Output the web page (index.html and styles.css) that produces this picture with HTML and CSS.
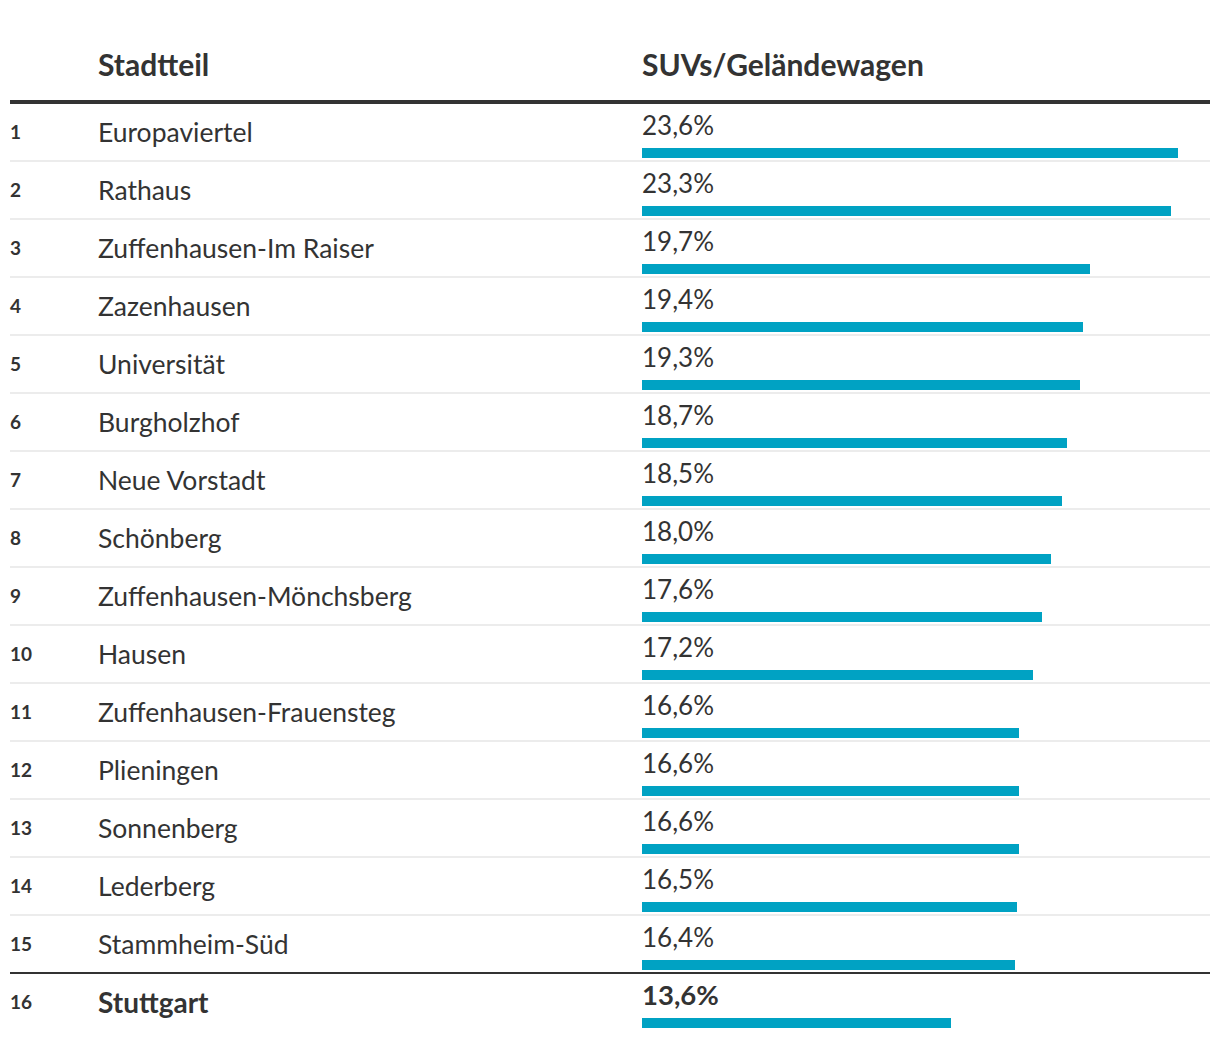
FILE: index.html
```html
<!DOCTYPE html>
<html lang="de">
<head>
<meta charset="utf-8">
<title>SUVs/Geländewagen nach Stadtteil</title>
<link rel="stylesheet" href="styles.css">
</head>
<body>
<div class="table">
  <div class="row head">
    <div class="rank"></div>
    <div class="name">Stadtteil</div>
    <div class="value">SUVs/Geländewagen</div>
  </div>
  <div class="row"><div class="rank">1</div><div class="name">Europaviertel</div><div class="value"><span class="num">23,6%</span><div class="bar" style="width:94.4%"></div></div></div>
  <div class="row"><div class="rank">2</div><div class="name">Rathaus</div><div class="value"><span class="num">23,3%</span><div class="bar" style="width:93.2%"></div></div></div>
  <div class="row"><div class="rank">3</div><div class="name">Zuffenhausen-Im Raiser</div><div class="value"><span class="num">19,7%</span><div class="bar" style="width:78.8%"></div></div></div>
  <div class="row"><div class="rank">4</div><div class="name">Zazenhausen</div><div class="value"><span class="num">19,4%</span><div class="bar" style="width:77.6%"></div></div></div>
  <div class="row"><div class="rank">5</div><div class="name">Universität</div><div class="value"><span class="num">19,3%</span><div class="bar" style="width:77.2%"></div></div></div>
  <div class="row"><div class="rank">6</div><div class="name">Burgholzhof</div><div class="value"><span class="num">18,7%</span><div class="bar" style="width:74.8%"></div></div></div>
  <div class="row"><div class="rank">7</div><div class="name">Neue Vorstadt</div><div class="value"><span class="num">18,5%</span><div class="bar" style="width:74%"></div></div></div>
  <div class="row"><div class="rank">8</div><div class="name">Schönberg</div><div class="value"><span class="num">18,0%</span><div class="bar" style="width:72%"></div></div></div>
  <div class="row"><div class="rank">9</div><div class="name">Zuffenhausen-Mönchsberg</div><div class="value"><span class="num">17,6%</span><div class="bar" style="width:70.4%"></div></div></div>
  <div class="row"><div class="rank">10</div><div class="name">Hausen</div><div class="value"><span class="num">17,2%</span><div class="bar" style="width:68.8%"></div></div></div>
  <div class="row"><div class="rank">11</div><div class="name">Zuffenhausen-Frauensteg</div><div class="value"><span class="num">16,6%</span><div class="bar" style="width:66.4%"></div></div></div>
  <div class="row"><div class="rank">12</div><div class="name">Plieningen</div><div class="value"><span class="num">16,6%</span><div class="bar" style="width:66.4%"></div></div></div>
  <div class="row"><div class="rank">13</div><div class="name">Sonnenberg</div><div class="value"><span class="num">16,6%</span><div class="bar" style="width:66.4%"></div></div></div>
  <div class="row"><div class="rank">14</div><div class="name">Lederberg</div><div class="value"><span class="num">16,5%</span><div class="bar" style="width:66%"></div></div></div>
  <div class="row last-before"><div class="rank">15</div><div class="name">Stammheim-Süd</div><div class="value"><span class="num">16,4%</span><div class="bar" style="width:65.6%"></div></div></div>
  <div class="row total"><div class="rank">16</div><div class="name">Stuttgart</div><div class="value"><span class="num">13,6%</span><div class="bar" style="width:54.4%"></div></div></div>
</div>
</body>
</html>
```
FILE: styles.css
```css
html, body {
  margin: 0;
  padding: 0;
  background: #fff;
}
body {
  padding: 0 10px;
  font-family: "Lato", "Liberation Sans", sans-serif;
  color: #333;
}
.table {
  width: 1200px;
}
.row {
  display: grid;
  grid-template-columns: 88px 544px 1fr;
  height: 56px;
  border-bottom: 2px solid #ececec;
}
.rank {
  align-self: center;
  font-size: 19px;
  font-weight: 700;
  line-height: 20px;
  padding-bottom: 1px;
}
.name {
  align-self: center;
  font-size: 26.5px;
  line-height: 30px;
}
.value {
  display: flex;
  flex-direction: column;
  padding-top: 7px;
}
.num {
  font-size: 26px;
  line-height: 28px;
}
.bar {
  margin-top: 9px;
  height: 10px;
  background: #00a2c3;
}
.row.head {
  height: 81px;
  align-items: end;
  padding-bottom: 19px;
  border-bottom: 4px solid #333;
}
.row.head .name,
.row.head .value {
  align-self: end;
  padding: 0;
  font-size: 30px;
  line-height: 34px;
  font-weight: 700;
}
.row.last-before {
  border-bottom: 2px solid #333;
}
.row.total {
  border-bottom: none;
}
.row.total .name {
  font-weight: 700;
  font-size: 28px;
}
.row.total .num {
  font-weight: 700;
  font-size: 27.5px;
}
```
